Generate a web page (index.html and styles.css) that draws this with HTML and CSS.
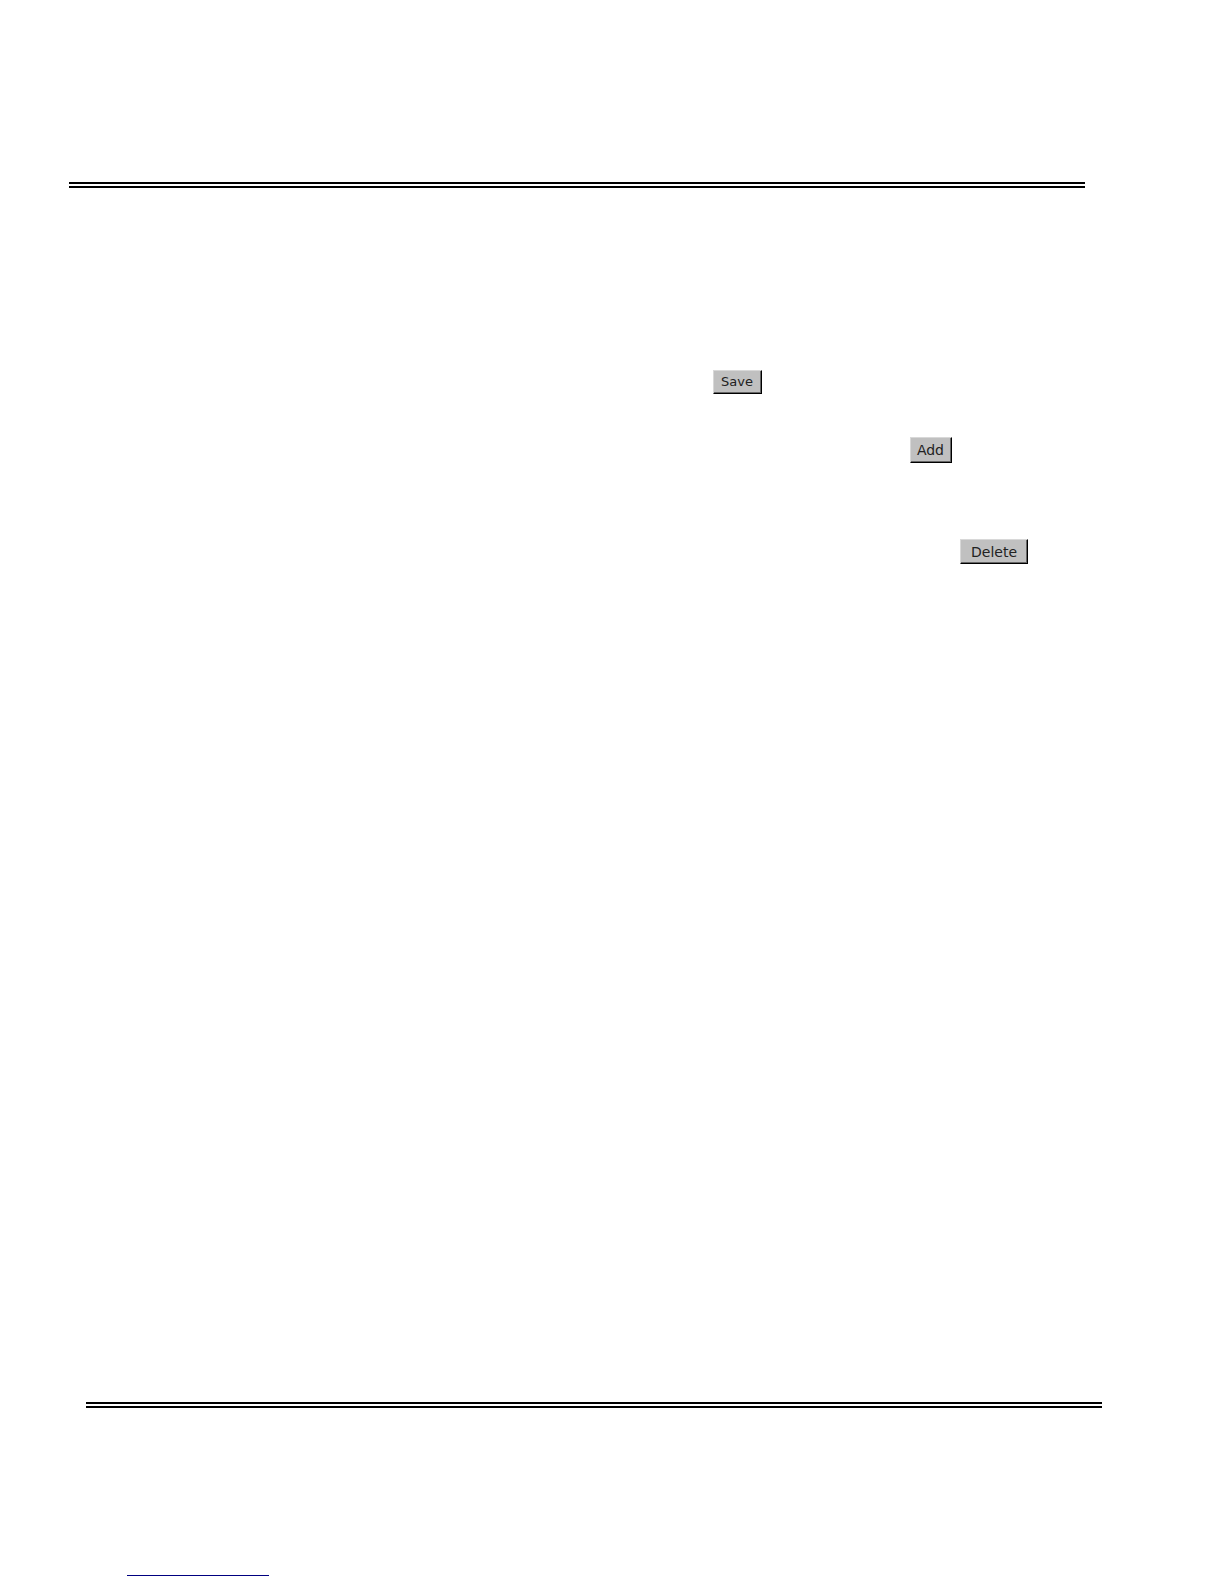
FILE: index.html
```
<!DOCTYPE html>
<html lang="en">
<head>
  <meta charset="UTF-8" />
  <title>Save, Add, Delete</title>
  <link rel="stylesheet" href="styles.css">
</head>
<body>

  <header>
    <hr class="rule rule-top" />
  </header>

  <main>
    <div class="row row-save">
      <button type="button" class="btn btn-save">Save</button>
    </div>
    <div class="row row-add">
      <button type="button" class="btn btn-add">Add</button>
    </div>
    <div class="row row-delete">
      <button type="button" class="btn btn-delete">Delete</button>
    </div>
  </main>

  <footer>
    <hr class="rule rule-bottom" />
    <a href="#" class="link" aria-label="Top of page"></a>
  </footer>

</body>
</html>
```

FILE: styles.css
```
* {
  box-sizing: border-box;
}

body {
  margin: 0;
  min-height: 100vh;
  display: flex;
  flex-direction: column;
  background: #fff;
  font-family: "DejaVu Sans", Verdana, sans-serif;
}

header {
  padding-top: 182px;
}

main {
  flex: 1;
  padding-top: 182px;
}

footer {
  padding-bottom: 8px;
}

.rule {
  border: 0;
  border-top: 6px double #000;
}

.rule-top {
  margin: 0 139px 0 69px;
}

.rule-bottom {
  margin: 0 122px 0 86px;
}

.row {
  display: flex;
  justify-content: flex-end;
}

.row-save {
  padding-right: 462px;
}

.row-add {
  margin-top: 43px;
  padding-right: 272px;
}

.row-delete {
  margin-top: 76px;
  padding-right: 196px;
}

/* grey raised buttons */
.btn {
  border: 1px solid;
  border-color: #d8d8d8 #000 #000 #d8d8d8;
  background: #c0c0c0;
  box-shadow: inset -1px -1px 0 #666;
  color: #222;
  font-family: inherit;
  font-size: 13px;
  line-height: 20px;
  padding: 1px 8px 1px 7px;
}

.btn-add,
.btn-delete {
  font-size: 14px;
}

.btn-add {
  padding: 2px 7px 2px 6px;
}

.btn-delete {
  padding: 2px 10px 1px;
}

.link {
  display: block;
  width: 142px;
  margin: 167px 0 0 127px;
  border-bottom: 1px solid #000080;
}
```
